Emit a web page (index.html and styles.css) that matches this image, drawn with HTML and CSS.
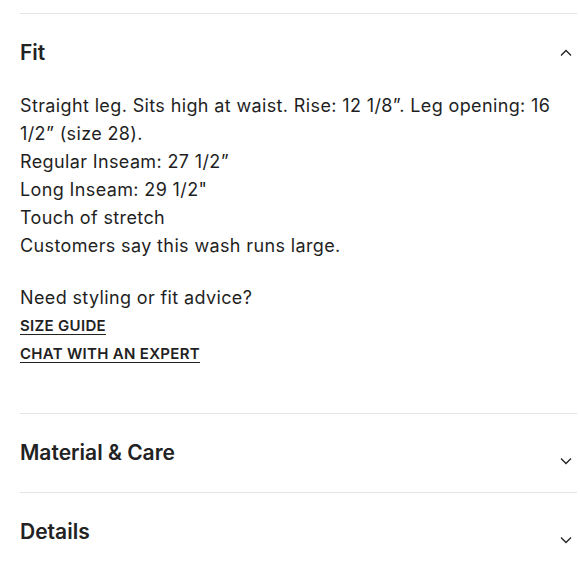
FILE: index.html
```html
<!DOCTYPE html>
<html>
<head>
<meta charset="utf-8">
<link rel="stylesheet" href="styles.css">
</head>
<body>
<div class="accordion">
  <section class="item open">
    <div class="head">
      <h2 class="title">Fit</h2>
      <svg class="chev up" width="12" height="8" viewBox="0 0 12 8"><path d="M1 6.5 L6 1.5 L11 6.5" fill="none" stroke="#222" stroke-width="1.3"/></svg>
    </div>
    <div class="body">
      <p class="para">Straight leg. Sits high at waist. Rise: 12 1/8”. Leg opening: 16 1/2” (size 28).<br>Regular Inseam: 27 1/2”<br>Long Inseam: 29 1/2"<br>Touch of stretch<br>Customers say this wash runs large.</p>
      <p class="para">Need styling or fit advice?</p>
      <a class="link" href="#">SIZE GUIDE</a>
      <a class="link" href="#">CHAT WITH AN EXPERT</a>
    </div>
  </section>
  <section class="item">
    <div class="head">
      <h2 class="title">Material &amp; Care</h2>
      <svg class="chev down" width="12" height="8" viewBox="0 0 12 8"><path d="M1 1.5 L6 6.5 L11 1.5" fill="none" stroke="#222" stroke-width="1.3"/></svg>
    </div>
  </section>
  <section class="item">
    <div class="head">
      <h2 class="title">Details</h2>
      <svg class="chev down" width="12" height="8" viewBox="0 0 12 8"><path d="M1 1.5 L6 6.5 L11 1.5" fill="none" stroke="#222" stroke-width="1.3"/></svg>
    </div>
  </section>
</div>
</body>
</html>
```
FILE: styles.css
```css
html, body {
  margin: 0;
  padding: 0;
  background: #fff;
}
body {
  font-family: Inter, "Liberation Sans", sans-serif;
  color: #1f1f1f;
}
.accordion {
  padding: 13px 3px 0 20px;
}
.item {
  border-top: 1px solid #e4e4e4;
}
.head {
  display: flex;
  align-items: center;
  justify-content: space-between;
  padding: 25px 5px 25px 0;
}
.title {
  margin: 0;
  font-size: 21px;
  line-height: 28px;
  font-weight: 600;
  color: #222;
}
.chev.down {
  margin-top: 15px;
}
.body {
  padding: 0 0 45px 0;
  display: flex;
  flex-direction: column;
  align-items: flex-start;
}
.para {
  margin: 0 0 24px 0;
  font-size: 18px;
  line-height: 28px;
  letter-spacing: 0.37px;
  color: #1f1f1f;
}
.para + .para {
  margin-bottom: 0;
}
.link {
  font-size: 15px;
  line-height: 28px;
  font-weight: 600;
  letter-spacing: 0.3px;
  color: #222;
  text-decoration: underline;
  text-underline-offset: 3px;
}
```
